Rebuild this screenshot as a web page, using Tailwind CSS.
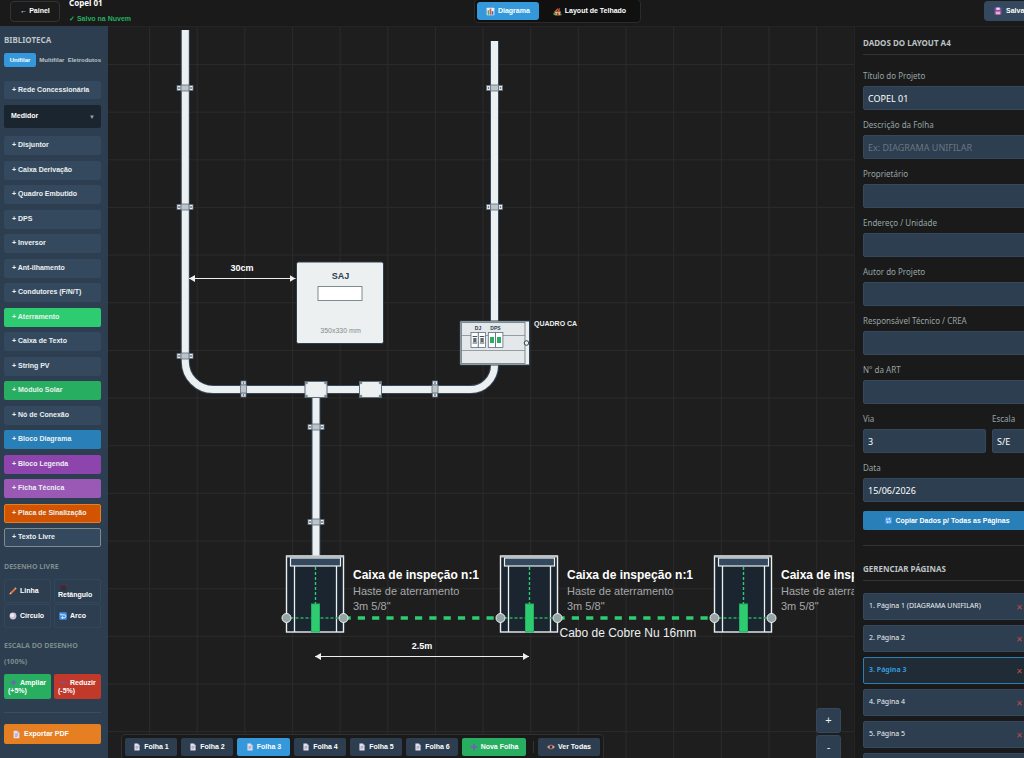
<!DOCTYPE html>
<html lang="pt-BR">
<head>
    <meta charset="UTF-8">
    <meta name="viewport" content="width=device-width, initial-scale=1.0">
    <title>Copel 01 - Diagrama</title>
    <script src="https://cdn.jsdelivr.net/npm/@tailwindcss/browser@4"></script>
</head>
<body class="flex h-screen flex-col overflow-hidden bg-[#1e1e1e] font-['Liberation_Sans',Arial,sans-serif] text-[7px] text-[#ecf0f1]">
    <!-- Icon sprite -->
    <svg class="hidden">
        <symbol id="i-page" viewBox="0 0 14 14">
            <path d="M2.500 1h6l3 3v9h-9z" fill="#e4e0ef"/>
            <path d="M8.500 1v3h3z" fill="#a9a4c4"/>
            <path d="M4.500 6h5M4.500 8h5M4.500 10h3.500" stroke="#8f8ab0" stroke-width="1"/>
        </symbol>
        <symbol id="i-chart" viewBox="0 0 14 14">
            <rect x="1" y="1" width="12" height="12" rx="1" fill="#e9eef3"/>
            <rect x="2.500" y="5" width="2.500" height="7" fill="#4caf50"/>
            <rect x="5.800" y="2.500" width="2.500" height="9.500" fill="#e24a5a"/>
            <rect x="9" y="6.500" width="2.500" height="5.500" fill="#3b6fc4"/>
        </symbol>
        <symbol id="i-house" viewBox="0 0 14 14">
            <path d="M3 7h8.500v6H3z" fill="#e8b07a"/>
            <path d="M1 8l6-6 6 6-1.500 1L7 5 2.500 9z" fill="#d2553c"/>
            <path d="M9 2h2v3l-2-2z" fill="#a86440"/>
            <rect x="6" y="9" width="2.500" height="4" fill="#8a4b2c"/>
            <circle cx="2.500" cy="11" r="2" fill="#3f9c57"/>
            <circle cx="12" cy="11.500" r="1.500" fill="#3f9c57"/>
        </symbol>
        <symbol id="i-save" viewBox="0 0 14 14">
            <path d="M1 1h10.500L13 2.500V13H1z" fill="#8e4bb0"/>
            <rect x="4" y="1" width="6" height="4" fill="#e9dff2"/>
            <rect x="3" y="8" width="8" height="5" fill="#f2a9c4"/>
        </symbol>
        <symbol id="i-pencil" viewBox="0 0 14 14">
            <path d="M2 9.500L9.500 2 12 4.500 4.500 12 1 13z" fill="#e8743b"/>
            <path d="M9.500 2L11 .5 13.500 3 12 4.500z" fill="#f0a0a0"/>
            <path d="M1 13l1-3.500L4.500 12z" fill="#f3d3a5"/>
        </symbol>
        <symbol id="i-square" viewBox="0 0 14 14">
            <rect x="1" y="1" width="12" height="12" fill="#3a2b3b"/>
            <path d="M1 1.500h12v5" fill="none" stroke="#8d3344" stroke-width="1"/>
        </symbol>
        <symbol id="i-ball" viewBox="0 0 14 14">
            <circle cx="7" cy="7" r="6" fill="#cdbfd8"/>
            <circle cx="5.500" cy="5.500" r="3.500" fill="#efe8f4"/>
        </symbol>
        <symbol id="i-loop" viewBox="0 0 14 14">
            <rect x="0.500" y="0.500" width="13" height="13" rx="1.500" fill="#3f8fe8"/>
            <path d="M3 5h6.500a2 2 0 0 1 0 5H5M7 8l-2.500 2L7 12M3 3v2" fill="none" stroke="#fff" stroke-width="1.400"/>
        </symbol>
        <symbol id="i-repeat" viewBox="0 0 14 14">
            <rect x="0.500" y="0.500" width="13" height="13" rx="1.500" fill="#4a9ff0"/>
            <path d="M3 7V4h7M8 2l2.500 2L8 6M11 7v3H4M6 8l-2.500 2L6 12" fill="none" stroke="#fff" stroke-width="1.300"/>
        </symbol>
        <symbol id="i-plus" viewBox="0 0 14 14">
            <path d="M7 1.500v11M1.500 7h11" stroke="#7a5bb5" stroke-width="3"/>
        </symbol>
        <symbol id="i-minus" viewBox="0 0 14 14">
            <path d="M1 7h12" stroke="#7d4fa8" stroke-width="3"/>
        </symbol>
        <symbol id="i-eye" viewBox="0 0 14 14">
            <path d="M0.500 7Q7 0 13.500 7 7 14 0.500 7z" fill="#f0e3e3" stroke="#a5655c" stroke-width="1.500"/>
            <circle cx="7" cy="7" r="3" fill="#6b3a30"/>
            <circle cx="7" cy="7" r="1.300" fill="#111"/>
        </symbol>
    </svg>

    <!-- Header -->
    <header class="flex h-[26px] shrink-0 items-center justify-between overflow-hidden bg-[#1a1a1a] pb-1 pl-[10px] font-bold">
        <div class="flex items-center gap-[9px]">
            <button class="h-[21px] w-[50px] rounded border border-[#333] text-white">← Painel</button>
            <div class="leading-4">
                <h1 class="font-['Noto_Sans',sans-serif] text-[8px] font-bold leading-4 text-white">Copel 01</h1>
                <p class="text-[#27ae60]">✓ Salvo na Nuvem</p>
            </div>
        </div>
        <nav class="flex h-6 items-center rounded border border-[#2b2b2b] bg-[#101010] px-[2px]">
            <button class="flex h-[18px] items-center gap-[3px] rounded-[3px] bg-[#3498db] px-[9px] text-white"><svg class="size-[9px]"><use href="#i-chart"/></svg>Diagrama</button>
            <button class="flex h-[18px] items-center gap-[3px] pl-[14px] pr-3 text-white"><svg class="size-[9px]"><use href="#i-house"/></svg>Layout de Telhado</button>
        </nav>
        <div class="w-10">
            <button class="flex h-5 w-16 items-center gap-[4px] rounded bg-[#34495e] pl-[10px] text-white"><svg class="size-2"><use href="#i-save"/></svg>Salvar</button>
        </div>
    </header>

    <div class="flex min-h-0 flex-1">
        <!-- Library -->
        <aside class="flex w-[108px] shrink-0 flex-col bg-[#2c3e50] pb-[14px] pl-1 pr-[7px] pt-[6px] font-bold">
            <h2 class="font-['Noto_Sans',sans-serif] text-[8px] font-bold leading-4 text-[#bdc3c7]">BIBLIOTECA</h2>
            <div class="mt-[5px] flex h-[14px] items-center justify-between text-[6px] text-[#bdc3c7]">
                <button class="h-full w-8 rounded-xs bg-[#3498db] text-white">Unifilar</button>
                <button>Multifilar</button>
                <button>Eletrodutos</button>
            </div>
            <button class="mt-[14px] h-[18px] shrink-0 rounded-xs bg-[#34495e] px-2 text-left">+ Rede Concessionária</button>
            <div class="relative mt-[6px]">
                <select aria-label="Medidor" class="block h-[23px] w-full appearance-none rounded-xs bg-[#1a252f] px-[7px] text-white">
                    <option>Medidor</option>
                </select>
                <span class="pointer-events-none absolute right-[6px] top-[8px] text-[6px] leading-2 text-[#95a5a6]">▼</span>
            </div>

            <div class="mt-2 flex flex-1 flex-col justify-between">
                <button class="h-[19px] rounded-xs bg-[#34495e] px-2 text-left">+ Disjuntor</button>
                <button class="h-[19px] rounded-xs bg-[#34495e] px-2 text-left">+ Caixa Derivação</button>
                <button class="h-[19px] rounded-xs bg-[#34495e] px-2 text-left">+ Quadro Embutido</button>
                <button class="h-[19px] rounded-xs bg-[#34495e] px-2 text-left">+ DPS</button>
                <button class="h-[19px] rounded-xs bg-[#34495e] px-2 text-left">+ Inversor</button>
                <button class="h-[19px] rounded-xs bg-[#34495e] px-2 text-left">+ Ant-ilhamento</button>
                <button class="h-[19px] rounded-xs bg-[#34495e] px-2 text-left">+ Condutores (F/N/T)</button>
                <button class="h-[19px] rounded-xs bg-[#2ecc71] px-2 text-left">+ Aterramento</button>
                <button class="h-[19px] rounded-xs bg-[#34495e] px-2 text-left">+ Caixa de Texto</button>
                <button class="h-[19px] rounded-xs bg-[#34495e] px-2 text-left">+ String PV</button>
                <button class="h-[19px] rounded-xs bg-[#27ae60] px-2 text-left">+ Módulo Solar</button>
                <button class="h-[19px] rounded-xs bg-[#34495e] px-2 text-left">+ Nó de Conexão</button>
                <button class="h-[19px] rounded-xs bg-[#2980b9] px-2 text-left">+ Bloco Diagrama</button>
                <button class="h-[19px] rounded-xs bg-[#8e44ad] px-2 text-left">+ Bloco Legenda</button>
                <button class="h-[19px] rounded-xs bg-[#9b59b6] px-2 text-left">+ Ficha Técnica</button>
                <button class="h-[19px] rounded-xs border border-[#e67e22] bg-[#d35400] px-[7px] text-left">+ Placa de Sinalização</button>
                <button class="h-[19px] rounded-xs border border-[#7f8c8d] bg-[#34495e] px-[7px] text-left">+ Texto Livre</button>
            </div>

            <h3 class="mt-3 font-['Open_Sans',sans-serif] text-[7px] font-bold leading-4 text-[#7f8c8d]">DESENHO LIVRE</h3>
            <div class="mt-1 grid grid-cols-2 gap-x-[3px] gap-y-px text-white">
                <button class="flex h-6 items-center gap-[3px] rounded-xs border border-[#32475b] px-1"><svg class="size-2"><use href="#i-pencil"/></svg>Linha</button>
                <button class="h-6 rounded-xs border border-[#32475b] px-[3px] text-left leading-2"><svg class="ml-[2px] block size-[7px]"><use href="#i-square"/></svg>Retângulo</button>
                <button class="flex h-6 items-center gap-[3px] rounded-xs border border-[#32475b] px-1"><svg class="size-2"><use href="#i-ball"/></svg>Círculo</button>
                <button class="flex h-6 items-center gap-[3px] rounded-xs border border-[#32475b] px-1"><svg class="size-2"><use href="#i-loop"/></svg>Arco</button>
            </div>

            <h3 class="mt-[10px] font-['Open_Sans',sans-serif] text-[7px] font-bold leading-4 text-[#7f8c8d]">ESCALA DO DESENHO (100%)</h3>
            <div class="mt-1 grid grid-cols-2 gap-[3px] leading-2 text-white">
                <button class="h-[25px] rounded-xs bg-[#27ae60] px-1 text-left"><span class="flex items-center gap-[3px] pl-[2px]"><svg class="size-[7px]"><use href="#i-plus"/></svg>Ampliar</span>(+5%)</button>
                <button class="h-[25px] rounded-xs bg-[#c0392b] px-1 text-left"><span class="flex items-center gap-[3px] pl-[2px]"><svg class="size-[7px]"><use href="#i-minus"/></svg>Reduzir</span>(-5%)</button>
            </div>
            <hr class="mt-[13px] border-[#3b4d5f]">
            <button class="mt-[11px] flex h-5 shrink-0 items-center gap-[3px] rounded-xs bg-[#e67e22] pl-2 text-white"><svg class="size-[9px]"><use href="#i-page"/></svg>Exportar PDF</button>
        </aside>

        <!-- Canvas -->
        <main class="relative min-w-0 flex-1 overflow-hidden border-t border-[#242424]">
            <svg class="absolute inset-0 h-full w-full">
                <defs>
                    <pattern id="grid" x="149" y="64" width="47.650" height="47.650" patternUnits="userSpaceOnUse">
                        <path d="M0 0H48M0 0V48" fill="none" stroke="#2a2a2a" stroke-width="2"/>
                    </pattern>
                    <marker id="arrow" viewBox="0 0 6 7" refX="6" refY="3.500" markerWidth="6" markerHeight="7" markerUnits="userSpaceOnUse" orient="auto-start-reverse">
                        <path d="M0 0L6 3.500 0 7z" fill="#ecf0f1"/>
                    </marker>
                    <g id="clamp" stroke="#5d6d7e" stroke-width="0.800">
                        <rect x="-8" y="-2.500" width="4" height="5" fill="#ecf0f1"/>
                        <rect x="4" y="-2.500" width="4" height="5" fill="#ecf0f1"/>
                        <rect x="-4" y="-3" width="8" height="6" fill="#bdc3c7"/>
                        <circle cx="-6" cy="0" r="0.600" fill="#2c3e50"/>
                        <circle cx="6" cy="0" r="0.600" fill="#2c3e50"/>
                    </g>
                    <g id="junction">
                        <rect x="-11" y="-8" width="22" height="16" fill="#ecf0f1" stroke="#5d6d7e"/>
                        <g fill="#7f8c8d">
                            <circle cx="-9.500" cy="-6.500" r="1.300"/>
                            <circle cx="9.500" cy="-6.500" r="1.300"/>
                            <circle cx="-9.500" cy="6.500" r="1.300"/>
                            <circle cx="9.500" cy="6.500" r="1.300"/>
                        </g>
                    </g>
                    <g id="pit">
                        <rect x="0" y="0" width="57" height="76" fill="#1a252f" stroke="#ecf0f1" stroke-width="1.400"/>
                        <path d="M0 0.500H57" stroke="#bdc3c7" stroke-width="2"/>
                        <path d="M8 9V76M50 9V76" stroke="#ecf0f1" stroke-width="1.300"/>
                        <rect x="4" y="2" width="50" height="8" fill="#34495e" stroke="#ecf0f1" stroke-width="1.200"/>
                        <path d="M29 11V48" stroke="#2ecc71" stroke-width="1.400" stroke-dasharray="3 2"/>
                        <path d="M4 62H54" stroke="#27ae60" stroke-width="1.400" stroke-dasharray="3 2"/>
                        <rect x="25" y="48" width="8" height="28" fill="#2ecc71" stroke="#27ae60"/>
                        <circle cx="0" cy="62" r="4.500" fill="#95a5a6" stroke="#ecf0f1"/>
                        <circle cx="57" cy="62" r="4.500" fill="#95a5a6" stroke="#ecf0f1"/>
                    </g>
                    <g id="pit-label" fill="#a5a8aa" font-size="11">
                        <text x="0" y="0" fill="#fff" font-size="12" font-weight="bold">Caixa de inspeção n:1</text>
                        <text x="0" y="16">Haste de aterramento</text>
                        <text x="0" y="31">3m 5/8"</text>
                    </g>
                </defs>

                <!-- current pan of the sheet -->
                <g transform="translate(-108 -27)">
                    <rect x="108" y="27" width="100%" height="100%" fill="url(#grid)"/>

                    <!-- Conduits -->
                    <g fill="none" stroke="#34495e" stroke-width="9">
                        <path d="M185.300 30V361A28 28 0 0 0 213 389.500H470A24 24 0 0 0 494.500 365V41"/>
                        <path d="M316 397V556"/>
                    </g>
                    <g fill="none" stroke="#ecf0f1" stroke-width="7">
                        <path d="M185.300 30V361A28 28 0 0 0 213 389.500H470A24 24 0 0 0 494.500 365V41"/>
                        <path d="M316 397V556"/>
                    </g>
                    <use href="#clamp" x="185" y="88"/>
                    <use href="#clamp" x="185" y="207"/>
                    <use href="#clamp" x="185" y="356"/>
                    <use href="#clamp" x="494.500" y="88"/>
                    <use href="#clamp" x="494.500" y="207"/>
                    <use href="#clamp" x="316" y="427"/>
                    <use href="#clamp" x="316" y="522"/>
                    <use href="#clamp" transform="translate(243.500 389) rotate(90)"/>
                    <use href="#clamp" transform="translate(435 389) rotate(90)"/>
                    <use href="#junction" x="316" y="389.500"/>
                    <use href="#junction" x="370.500" y="389.500"/>

                    <!-- Dimensions -->
                    <g stroke="#ecf0f1">
                        <path d="M189 278.500H295.500" marker-start="url(#arrow)" marker-end="url(#arrow)"/>
                        <path d="M315 656.500H529" marker-start="url(#arrow)" marker-end="url(#arrow)"/>
                    </g>
                    <g fill="#fff" font-size="9" font-weight="bold" text-anchor="middle">
                        <text x="242" y="271">30cm</text>
                        <text x="422" y="649">2.5m</text>
                    </g>

                    <!-- Inverter -->
                    <rect x="296.500" y="262" width="87" height="81.500" rx="2" fill="#ecf0f1" stroke="#2c3e50"/>
                    <rect x="318" y="286.500" width="44" height="14" fill="#fff" stroke="#7f8c8d"/>
                    <text x="340.500" y="279" fill="#2c3e50" font-size="9" font-weight="bold" text-anchor="middle">SAJ</text>
                    <text x="340.500" y="333" fill="#7f8c8d" font-size="7" text-anchor="middle">350x330 mm</text>

                    <!-- AC board -->
                    <rect x="460" y="321" width="69.500" height="44" fill="#ecf0f1" stroke="#2c3e50"/>
                    <rect x="461.500" y="322.500" width="63.500" height="41" fill="#e4e8ea" stroke="#7f8c8d"/>
                    <path d="M461.500 335.500H525M461.500 350.500H525" stroke="#7f8c8d" stroke-width="0.800"/>
                    <g fill="#fff" stroke="#5d6d7e" stroke-width="0.800">
                        <rect x="471" y="332.500" width="7.300" height="15"/>
                        <rect x="478.300" y="332.500" width="7.300" height="15"/>
                        <rect x="488.300" y="332.500" width="7.300" height="15"/>
                        <rect x="495.600" y="332.500" width="7.300" height="15"/>
                    </g>
                    <path d="M472.600 336.500h4.500M472.600 343h4.500M479.800 336.500h4.500M479.800 343h4.500" stroke="#4b5358" stroke-width="1"/>
                    <path d="M473.200 338h3.300v4h-3.300zM480.400 338h3.300v4h-3.300z" fill="#5f686d"/>
                    <path d="M490 337h4v6h-4zM497 337h4v6h-4z" fill="#27ae60"/>
                    <circle cx="526.500" cy="343" r="2.300" fill="#ecf0f1" stroke="#2c3e50"/>
                    <g fill="#2c3e50" font-size="5" font-weight="bold" text-anchor="middle">
                        <text x="478" y="330">DJ</text>
                        <text x="495.500" y="330">DPS</text>
                    </g>
                    <text x="534" y="326" fill="#ecf0f1" font-size="7" font-weight="bold">QUADRO CA</text>

                    <!-- Grounding -->
                    <path d="M343.500 618H500M557.500 618H714.500" stroke="#2ecc71" stroke-width="3.500" stroke-dasharray="7.200 7.100"/>
                    <use href="#pit" x="286.500" y="556"/>
                    <use href="#pit" x="500.500" y="556"/>
                    <use href="#pit" x="714.500" y="556"/>
                    <use href="#pit-label" x="353" y="579"/>
                    <use href="#pit-label" x="567" y="579"/>
                    <use href="#pit-label" x="781" y="579"/>
                    <text x="559.500" y="637" fill="#ecf0f1" font-size="12">Cabo de Cobre Nu 16mm</text>
                </g>
            </svg>

            <!-- Zoom -->
            <div class="absolute -bottom-[2px] right-[13px] flex flex-col gap-[2px] text-[11px] text-[#ecf0f1]">
                <button class="size-[25px] rounded-[3px] border border-[#34495e] bg-[#2c3e50]">+</button>
                <button class="size-[25px] rounded-[3px] border border-[#34495e] bg-[#2c3e50]">-</button>
            </div>

            <!-- Sheet tabs -->
            <nav class="absolute -bottom-[3px] left-[13px] flex items-center gap-1 rounded border border-[#303030] bg-[#1a1a1a] px-[3px] pb-[4px] pt-[3px] font-bold text-white">
                <button class="flex h-[18px] w-[52px] items-center justify-center gap-[3px] rounded-xs bg-[#2c3e50]"><svg class="size-2"><use href="#i-page"/></svg>Folha 1</button>
                <button class="flex h-[18px] w-[52px] items-center justify-center gap-[3px] rounded-xs bg-[#2c3e50]"><svg class="size-2"><use href="#i-page"/></svg>Folha 2</button>
                <button class="flex h-[18px] w-[53px] items-center justify-center gap-[3px] rounded-xs bg-[#3498db]"><svg class="size-2"><use href="#i-page"/></svg>Folha 3</button>
                <button class="flex h-[18px] w-[52px] items-center justify-center gap-[3px] rounded-xs bg-[#2c3e50]"><svg class="size-2"><use href="#i-page"/></svg>Folha 4</button>
                <button class="flex h-[18px] w-[52px] items-center justify-center gap-[3px] rounded-xs bg-[#2c3e50]"><svg class="size-2"><use href="#i-page"/></svg>Folha 5</button>
                <button class="flex h-[18px] w-[52px] items-center justify-center gap-[3px] rounded-xs bg-[#2c3e50]"><svg class="size-2"><use href="#i-page"/></svg>Folha 6</button>
                <button class="flex h-[18px] w-16 items-center justify-center gap-[3px] rounded-xs bg-[#27ae60]"><svg class="size-2"><use href="#i-plus"/></svg>Nova Folha</button>
                <span class="ml-[3px] h-3 w-px bg-[#333]"></span>
                <button class="flex h-[18px] w-[62px] items-center justify-center gap-[3px] rounded-xs bg-[#2c3e50]"><svg class="size-2"><use href="#i-eye"/></svg>Ver Todas</button>
            </nav>
        </main>

        <!-- Sheet data -->
        <aside class="w-[170px] shrink-0 overflow-hidden border-l border-t border-[#242424] bg-[#1a1a1a] font-['Noto_Sans',sans-serif]">
            <div class="w-[185px] px-2 pt-2">
                <h2 class="border-b border-[#333] pb-[3px] text-[8px] font-bold leading-4 text-[#bdc3c7]">DADOS DO LAYOUT A4</h2>
                <form class="mt-[13px] flex flex-col gap-[7px] text-[8px] leading-4 text-[#95a5a6]">
                    <label class="flex flex-col gap-[2px]">Título do Projeto
                        <input type="text" value="COPEL 01" class="h-6 w-full rounded-xs border border-[#34495e] bg-[#2c3e50] px-1 text-[9px] text-white">
                    </label>
                    <label class="flex flex-col gap-[2px]">Descrição da Folha
                        <input type="text" placeholder="Ex: DIAGRAMA UNIFILAR" class="h-6 w-full rounded-xs border border-[#34495e] bg-[#2c3e50] px-1 text-[9px] text-white placeholder:text-[#6b7680]">
                    </label>
                    <label class="flex flex-col gap-[2px]">Proprietário
                        <input type="text" class="h-6 w-full rounded-xs border border-[#34495e] bg-[#2c3e50] px-1 text-[9px] text-white">
                    </label>
                    <label class="flex flex-col gap-[2px]">Endereço / Unidade
                        <input type="text" class="h-6 w-full rounded-xs border border-[#34495e] bg-[#2c3e50] px-1 text-[9px] text-white">
                    </label>
                    <label class="flex flex-col gap-[2px]">Autor do Projeto
                        <input type="text" class="h-6 w-full rounded-xs border border-[#34495e] bg-[#2c3e50] px-1 text-[9px] text-white">
                    </label>
                    <label class="flex flex-col gap-[2px]">Responsável Técnico / CREA
                        <input type="text" class="h-6 w-full rounded-xs border border-[#34495e] bg-[#2c3e50] px-1 text-[9px] text-white">
                    </label>
                    <label class="flex flex-col gap-[2px]">N° da ART
                        <input type="text" class="h-6 w-full rounded-xs border border-[#34495e] bg-[#2c3e50] px-1 text-[9px] text-white">
                    </label>
                    <div class="flex gap-[6px]">
                        <label class="flex w-[123px] shrink-0 flex-col gap-[2px]">Via
                            <input type="text" value="3" class="h-6 w-full rounded-xs border border-[#34495e] bg-[#2c3e50] px-1 text-[9px] text-white">
                        </label>
                        <label class="flex min-w-0 flex-1 flex-col gap-[2px]">Escala
                            <input type="text" value="S/E" class="h-6 w-full rounded-xs border border-[#34495e] bg-[#2c3e50] px-1 text-[9px] text-white">
                        </label>
                    </div>
                    <label class="flex flex-col gap-[2px]">Data
                        <input type="text" value="15/06/2026" class="h-6 w-full rounded-xs border border-[#34495e] bg-[#2c3e50] px-1 text-[9px] text-white">
                    </label>
                    <button type="button" class="mt-[2px] flex h-[19px] items-center justify-center gap-[3px] rounded-xs bg-[#2980b9] font-['Liberation_Sans',Arial,sans-serif] text-[7px] font-bold text-white"><svg class="size-[7px]"><use href="#i-repeat"/></svg>Copiar Dados p/ Todas as Páginas</button>
                </form>

                <hr class="mt-[15px] border-[#333]">
                <h2 class="mt-[15px] border-b border-[#333] pb-[3px] text-[8px] font-bold leading-4 text-[#bdc3c7]">GERENCIAR PÁGINAS</h2>
                <ul class="mt-3 flex flex-col gap-[5px] text-[7px] text-[#ecf0f1]">
                    <li class="flex h-[27px] items-center justify-between rounded-xs border border-[#34495e] bg-[#2c3e50] pl-[5px] pr-2">1. Página 1 (DIAGRAMA UNIFILAR)<button aria-label="Excluir página 1" class="text-[8px] text-[#c94a40]">✕</button></li>
                    <li class="flex h-[27px] items-center justify-between rounded-xs border border-[#34495e] bg-[#2c3e50] pl-[5px] pr-2">2. Página 2<button aria-label="Excluir página 2" class="text-[8px] text-[#c94a40]">✕</button></li>
                    <li class="flex h-[27px] items-center justify-between rounded-xs border border-[#2980b9] bg-[#1f2b35] pl-[5px] pr-2 font-bold text-[#3498db]">3. Página 3<button aria-label="Excluir página 3" class="text-[8px] font-normal text-[#c94a40]">✕</button></li>
                    <li class="flex h-[27px] items-center justify-between rounded-xs border border-[#34495e] bg-[#2c3e50] pl-[5px] pr-2">4. Página 4<button aria-label="Excluir página 4" class="text-[8px] text-[#c94a40]">✕</button></li>
                    <li class="flex h-[27px] items-center justify-between rounded-xs border border-[#34495e] bg-[#2c3e50] pl-[5px] pr-2">5. Página 5<button aria-label="Excluir página 5" class="text-[8px] text-[#c94a40]">✕</button></li>
                    <li class="flex h-[27px] items-center justify-between rounded-xs border border-[#34495e] bg-[#2c3e50] pl-[5px] pr-2">6. Página 6<button aria-label="Excluir página 6" class="text-[8px] text-[#c94a40]">✕</button></li>
                </ul>
            </div>
        </aside>
    </div>
</body>
</html>
